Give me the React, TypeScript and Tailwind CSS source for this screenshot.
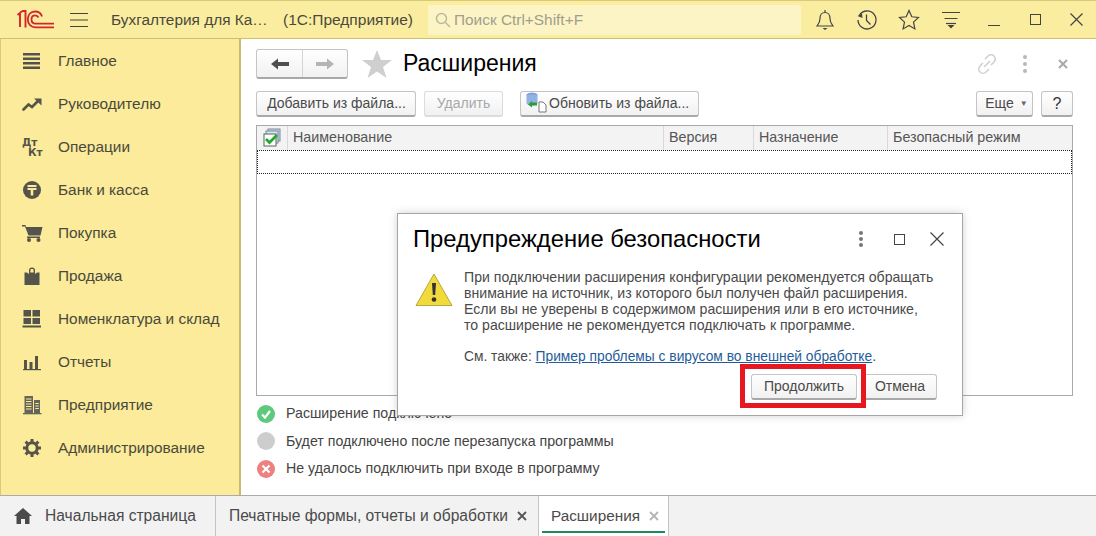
import React from 'react';

const font = { fontFamily: '"Liberation Sans", Arial, sans-serif' };

function Logo() {
  return (
    <svg width="38" height="20" viewBox="0 0 38 20" fill="none" stroke="#d3262c">
      <path d="M0.500 5 L3 3 V17 M3 2.500 L6 1 H8.500 V17.500" strokeWidth="1.900" />
      <path d="M25 6.500 C24 3 21 1.500 18 1.500 C13.500 1.500 10.800 5 10.800 9.500 C10.800 14 14 17.300 18.500 17.300 H37" strokeWidth="1.800" />
      <path d="M21.500 7.500 C20.800 6 19.500 5.300 18 5.300 C15.800 5.300 14.500 7 14.500 9.300 C14.500 11.800 16 13.600 18.500 13.600 H37" strokeWidth="1.800" />
    </svg>
  );
}

function Bell() {
  return (
    <svg width="20" height="22" viewBox="0 0 20 22" fill="none" stroke="#444" strokeWidth="1.200">
      <path d="M10 1v2M2 17c1.500-2 3-3.500 3-7.500 0-3.500 2-6 5-6s5 2.500 5 6c0 4 1.500 5.500 3 7.500z" />
      <path d="M7.500 19h5l-2.500 2z" fill="#444" stroke="none" />
    </svg>
  );
}
function History() {
  return (
    <svg width="22" height="22" viewBox="0 0 22 22" fill="none" stroke="#444" strokeWidth="1.300">
      <path d="M3.500 6A9 9 0 1 1 2 11" />
      <path d="M1.500 7l4.500-2.500L6.500 9z" fill="#444" stroke="none" />
      <path d="M10.500 5.500v6l4 4" />
    </svg>
  );
}
function StarOutline() {
  return (
    <svg width="22" height="22" viewBox="0 0 22 22" fill="none" stroke="#444" strokeWidth="1.200">
      <path d="M11 1.500l2.800 6.300 6.700.7-5 4.600 1.400 6.800-5.900-3.400-5.900 3.400 1.400-6.800-5-4.600 6.700-.7z" />
    </svg>
  );
}
function FilterLines() {
  return (
    <svg width="20" height="20" viewBox="0 0 20 20" fill="none" stroke="#444" strokeWidth="1.200">
      <path d="M1 2.500h18M3.500 8.500h13" />
      <path d="M6.500 15h7l-3.500 3.500z" fill="#444" stroke="none" />
      <path d="M5 13.500h10" />
    </svg>
  );
}

const iconFill = '#55544a';
const sideIcons: Record<string, React.ReactNode> = {
  main: <svg width="20" height="20" viewBox="0 0 20 20" fill={iconFill}><rect x="1" y="2" width="17" height="2.500" /><rect x="1" y="6.500" width="17" height="2.500" /><rect x="1" y="11" width="17" height="2.500" /><rect x="1" y="15.500" width="17" height="2.500" /></svg>,
  chart: <svg width="20" height="20" viewBox="0 0 20 20" fill="none" stroke={iconFill} strokeWidth="2.600" strokeLinecap="round"><path d="M1.500 15.500L6.500 10.500 10 13 15 8" /><path d="M12 4.500h7.500v7z" fill={iconFill} stroke="none" /></svg>,
  dtkt: <div className="relative w-[20px] h-[20px] font-bold text-[10.500px] leading-none" style={{ fontFamily: '"DejaVu Sans", sans-serif', color: iconFill }}><span className="absolute left-0 top-[0px]">Дт</span><span className="absolute left-[6px] top-[10px]">Кт</span></div>,
  bank: <svg width="20" height="20" viewBox="0 0 20 20"><circle cx="10" cy="10" r="9" fill={iconFill} /><path d="M5.500 5h9v2h-9zM5.500 8h9v2h-3.200v5.500h-2.600V10h-3.200z" fill="#fbeb9a" /></svg>,
  cart: <svg width="22" height="20" viewBox="0 0 22 20" fill={iconFill}><path d="M1 2h3.500l.5 2h16.500l-2 8.500H7.500L4 3.500H1z" /><rect x="6" y="13.500" width="13" height="1.500" /><circle cx="8" cy="17" r="2" /><circle cx="17.500" cy="17" r="2" /></svg>,
  bag: <svg width="20" height="20" viewBox="0 0 20 20" fill={iconFill}><path d="M2.500 6.500h2.500l2 1.500V4.500a3 3 0 0 1 6 0V8l2-1.500h2.500v12.500h-15zM8.300 6.500h3.400V4.500a1.700 1.700 0 0 0-3.400 0z" fillRule="evenodd" /></svg>,
  grid: <svg width="20" height="20" viewBox="0 0 20 20" fill={iconFill}><rect x="1.500" y="1" width="7.500" height="6.500" /><rect x="10.500" y="1" width="7.500" height="6.500" /><rect x="1.500" y="9" width="7.500" height="6" /><rect x="10.500" y="9" width="7.500" height="6" /><rect x="0.500" y="16.500" width="18.500" height="2" /></svg>,
  bars: <svg width="20" height="20" viewBox="0 0 20 20" fill={iconFill}><rect x="2" y="8" width="3" height="9" /><rect x="7.500" y="10" width="3" height="7" /><rect x="13" y="4" width="3" height="13" /><rect x="1" y="17" width="18" height="1.200" /></svg>,
  org: <svg width="20" height="20" viewBox="0 0 20 20" fill="#66655a"><path d="M2.500 1H11v17H2.500zM12 5h6v13h-6z" /><path d="M4 3.500h5.500v1H4zM4 6h5.500v1H4zM4 8.500h5.500v1H4zM4 11h5.500v1H4zM4 13.500h5.500v1H4zM13.300 8h3.500v1h-3.500zM13.300 10.500h3.500v1h-3.500zM13.300 13h3.500v1h-3.500z" fill="#fbeb9a" /><rect x="1" y="18" width="18.500" height="1.300" /></svg>,
  gear: <svg width="20" height="20" viewBox="0 0 20 20" fill="none" stroke={iconFill}><circle cx="10" cy="10" r="5.200" strokeWidth="3" /><path d="M10 1v3M10 16v3M1 10h3M16 10h3M3.600 3.600l2.200 2.200M14.200 14.200l2.200 2.200M3.600 16.400l2.200-2.200M14.200 5.800l2.200-2.200" strokeWidth="3" /></svg>,
};

const menu: [string, string][] = [
  ['main', 'Главное'], ['chart', 'Руководителю'], ['dtkt', 'Операции'], ['bank', 'Банк и касса'], ['cart', 'Покупка'],
  ['bag', 'Продажа'], ['grid', 'Номенклатура и склад'], ['bars', 'Отчеты'], ['org', 'Предприятие'], ['gear', 'Администрирование'],
];

function Btn({ children, className = '' }: { children: React.ReactNode; className?: string }) {
  return (
    <div className={`flex items-center justify-center h-[26px] rounded-[3px] border border-[#c4c4c4] border-b-[#a8a8a8] border-b-2 bg-gradient-to-b from-white to-[#f1f1f1] text-[14px] text-[#4a4a4a] ${className}`}>
      {children}
    </div>
  );
}

function Legend({ color, icon, text }: { color: string; icon: React.ReactNode; text: string }) {
  return (
    <div className="flex items-center h-[27.500px]">
      <svg width="18" height="18" viewBox="0 0 18 18" className="ml-[1px] shrink-0">
        <circle cx="9" cy="9" r="9" fill={color} />
        {icon}
      </svg>
      <span className="ml-[11px] text-[14.200px] text-[#444] whitespace-nowrap">{text}</span>
    </div>
  );
}

export default function App() {
  return (
    <div className="relative flex flex-col w-[1096px] h-[536px] overflow-hidden bg-white" style={font}>
      {/* top bar */}
      <header className="flex items-center h-[39px] shrink-0 bg-[#fbeda0] border-t border-t-[#d8ca7c] border-b border-b-[#cdbf70]">
        <div className="ml-[17px] w-[38px] flex"><Logo /></div>
        <svg width="18" height="16" viewBox="0 0 18 16" className="ml-[15px]" stroke="#444" strokeWidth="1.200"><path d="M0 1.500h18M0 8h18M0 14.500h18" /></svg>
        <span className="ml-[23px] text-[15.400px] text-[#4a4a3c] whitespace-nowrap w-[158px]">Бухгалтерия для Ка…</span>
        <span className="ml-[14px] text-[15.500px] text-[#4a4a3c] whitespace-nowrap w-[131px]">(1С:Предприятие)</span>
        <div className="ml-[14px] flex items-center w-[373px] h-[30px] bg-[#fdf4c6] rounded-[2px]">
          <svg width="16" height="16" viewBox="0 0 16 16" fill="none" stroke="#b9b9a0" strokeWidth="1.500" className="ml-[7px]"><circle cx="6.500" cy="6.500" r="5" /><path d="M10.500 10.500L15 15" /></svg>
          <span className="ml-[3px] text-[15.400px] text-[#a09f8c]">Поиск Ctrl+Shift+F</span>
        </div>
        <div className="ml-[12px] w-[24px] flex justify-center"><Bell /></div>
        <div className="ml-[18px] w-[24px] flex justify-center"><History /></div>
        <div className="ml-[18px] w-[24px] flex justify-center"><StarOutline /></div>
        <div className="ml-[18px] w-[24px] flex justify-center"><FilterLines /></div>
        <div className="ml-[25px] w-[12px] h-[12px] border-b-[1.500px] border-[#444]" />
        <div className="ml-[30px] w-[9px] h-[9px] border-[1.500px] border-[#444] box-content" />
        <svg width="13" height="13" viewBox="0 0 13 13" stroke="#444" strokeWidth="1.200" className="ml-[29px]"><path d="M.5.500l12 12M12.500.500l-12 12" /></svg>
      </header>

      <div className="flex flex-1 min-h-0">
        {/* sidebar */}
        <aside className="w-[241px] shrink-0 bg-[#fbeb9a] border-l border-l-[#d8ca7c] border-r-2 border-r-[#c8ba6e]">
          {menu.map(([k, label]) => (
            <div key={k} className="flex items-center h-[43px]">
              <div className="ml-[20px] w-[22px] h-[22px] flex items-center justify-center">{sideIcons[k]}</div>
              <span className="ml-[15px] text-[15.400px] text-[#4a4a3c] whitespace-nowrap">{label}</span>
            </div>
          ))}
        </aside>

        {/* main */}
        <main className="flex-1 flex flex-col min-w-0 pl-[15px] pr-[23px] pt-[10px]">
          <div className="flex items-center h-[30px]">
            <div className="flex w-[92px] h-[30px] rounded-[3px] border border-[#c4c4c4] border-b-2 border-b-[#a8a8a8] bg-gradient-to-b from-white to-[#f1f1f1]">
              <div className="w-[46px] flex items-center justify-center border-r border-[#d4d4d4]">
                <svg width="18" height="12" viewBox="0 0 18 12" fill="#4f4f4f"><path d="M0 6l7-5.500V4h11v4H7v3.500z" /></svg>
              </div>
              <div className="flex-1 flex items-center justify-center">
                <svg width="18" height="12" viewBox="0 0 18 12" fill="#b4b4b4"><path d="M18 6l-7-5.500V4H0v4h11v3.500z" /></svg>
              </div>
            </div>
            <svg width="30" height="28" viewBox="0 0 30 28" fill="#cfcfcf" className="ml-[14px]"><path d="M15 0l4 10h11l-9 7 3.500 11L15 21.500 5.500 28 9 17 0 10h11z" /></svg>
            <span className="ml-[11px] text-[23px] text-black whitespace-nowrap -mt-[1px]">Расширения</span>
            <div className="ml-auto flex items-center">
              <svg width="22" height="22" viewBox="0 0 22 22" fill="none" stroke="#d0d0d0" strokeWidth="1.600" className="mr-[25px]">
                <path d="M9 6l3-3a4 4 0 0 1 6 6l-3 3M13 16l-3 3a4 4 0 0 1-6-6l3-3M8 14l6-6" />
              </svg>
              <div className="flex flex-col gap-[3px] mr-[31px]">
                <i className="block w-[4px] h-[4px] rounded-full bg-[#b8b8b8]" />
                <i className="block w-[4px] h-[4px] rounded-full bg-[#b8b8b8]" />
                <i className="block w-[4px] h-[4px] rounded-full bg-[#b8b8b8]" />
              </div>
              <svg width="10" height="10" viewBox="0 0 10 10" stroke="#a8a8a8" strokeWidth="2" className="mr-[5px]"><path d="M1 1l8 8M9 1l-8 8" /></svg>
            </div>
          </div>

          <div className="flex items-center mt-[12px]">
            <Btn className="w-[160px] pl-[1px]">Добавить из файла...</Btn>
            <Btn className="w-[79px] ml-[8px] !text-[#a8a8a8] !border-[#dcdcdc]">Удалить</Btn>
            <Btn className="w-[179px] ml-[17px] !justify-start pl-[3px]">
              <svg width="24" height="22" viewBox="0 0 24 22" className="mr-[1px] -mt-[3px] shrink-0">
                <ellipse cx="8" cy="4" rx="5.500" ry="2.500" fill="#7fa6dc" />
                <path d="M2.500 4v8a5.500 2.500 0 0 0 11 0V4z" fill="#8fb4e4" />
                <path d="M8 10l-4 3.500 4 3v-2h5v-3H8z" fill="#2f9b3a" />
                <path d="M15 11h4l3 3v7h-7z" fill="#fff" stroke="#777" />
              </svg>
              Обновить из файла...
            </Btn>
            <Btn className="w-[57px] ml-auto pl-[4px]">Еще<span className="ml-[6px] text-[8px] text-[#666]">▼</span></Btn>
            <Btn className="w-[32px] ml-[8px] !text-[16px] !text-[#333]">?</Btn>
          </div>

          {/* table */}
          <div className="mt-[8px] h-[271px] border border-[#a9a9a9] flex flex-col">
            <div className="flex h-[24px] shrink-0 bg-[#f3f3f3] text-[14.300px] text-[#555]">
              <div className="w-[31px] flex items-center justify-center border-r border-[#d9d9d9]">
                <svg width="20" height="20" viewBox="0 0 20 20">
                  <rect x="6" y="1" width="12" height="12" fill="#c7d4e4" stroke="#7c8a9c" />
                  <rect x="4" y="3" width="12" height="12" fill="#dbe5f0" stroke="#7c8a9c" />
                  <rect x="2" y="6" width="12" height="12" fill="#fff" stroke="#4f6b50" />
                  <path d="M4 11l3.500 3.500L15 7" fill="none" stroke="#25a82f" strokeWidth="2.800" />
                </svg>
              </div>
              <div className="w-[376px] flex items-center pl-[5px] border-r border-[#d9d9d9]">Наименование</div>
              <div className="w-[90px] flex items-center pl-[5px] border-r border-[#d9d9d9]">Версия</div>
              <div className="w-[134px] flex items-center pl-[5px] border-r border-[#d9d9d9]">Назначение</div>
              <div className="flex-1 flex items-center pl-[5px]">Безопасный режим</div>
            </div>
            <div className="h-[24px] shrink-0 border border-dotted border-[#222]" />
          </div>

          {/* legend */}
          <div className="mt-[4px]">
            <Legend color="#5dc97d" text="Расширение подключено" icon={<path d="M5 9.500l3 3 5-6.500" fill="none" stroke="#fff" strokeWidth="2.200" />} />
            <Legend color="#cdcdcd" text="Будет подключено после перезапуска программы" icon={null} />
            <Legend color="#ef8080" text="Не удалось подключить при входе в программу" icon={<path d="M5.500 5.500l7 7M12.500 5.500l-7 7" fill="none" stroke="#fff" strokeWidth="2.200" />} />
          </div>
        </main>
      </div>

      {/* tabs */}
      <footer className="flex h-[41px] shrink-0 bg-[#f2f2f2] border-t border-[#ababab] text-[15.600px] text-[#4a4a4a]">
        <div className="w-[216px] flex items-center border-r border-[#c4c4c4]">
          <svg width="18" height="16" viewBox="0 0 18 16" fill="#4a4a4a" className="ml-[14px]"><path d="M9 0l9 8h-2.500v8H11v-5H7v5H2.500V8H0z" /></svg>
          <span className="ml-[13px] whitespace-nowrap">Начальная страница</span>
        </div>
        <div className="w-[323px] flex items-center border-r border-[#c4c4c4]">
          <span className="ml-[13px] whitespace-nowrap">Печатные формы, отчеты и обработки</span>
          <svg width="10" height="10" viewBox="0 0 10 10" stroke="#555" strokeWidth="1.800" className="ml-[9px]"><path d="M1 1l8 8M9 1l-8 8" /></svg>
        </div>
        <div className="relative w-[130px] flex items-center bg-white border-r border-[#c4c4c4]">
          <span className="ml-[12px] text-[15.300px]">Расширения</span>
          <svg width="10" height="10" viewBox="0 0 10 10" stroke="#b4b4b4" strokeWidth="1.800" className="ml-[9px]"><path d="M1 1l8 8M9 1l-8 8" /></svg>
          <div className="absolute left-[3px] right-[3px] bottom-[3px] h-[2px] bg-[#1f8a5c]" />
        </div>
      </footer>

      {/* dialog */}
      <div className="absolute left-[397px] top-[213px] w-[566px] h-[203px] bg-white border border-[#a6a6a6] shadow-[0_0_8px_rgba(0,0,0,0.18)] flex flex-col">
        <div className="flex items-center h-[50px]">
          <span className="ml-[15px] text-[23.800px] text-black whitespace-nowrap">Предупреждение безопасности</span>
          <div className="ml-auto flex items-center">
            <div className="flex flex-col gap-[2px] mr-[31px]">
              <i className="block w-[4px] h-[4px] rounded-full bg-[#777]" />
              <i className="block w-[4px] h-[4px] rounded-full bg-[#777]" />
              <i className="block w-[4px] h-[4px] rounded-full bg-[#777]" />
            </div>
            <div className="w-[9px] h-[9px] border-[1.500px] border-[#444] box-content mr-[25px]" />
            <svg width="14" height="14" viewBox="0 0 14 14" stroke="#444" strokeWidth="1.200" className="mr-[18px]"><path d="M.5.500l13 13M13.500.500l-13 13" /></svg>
          </div>
        </div>
        <div className="flex flex-1">
          <svg width="38" height="34" viewBox="0 0 38 34" className="ml-[17px] mt-[9px] shrink-0">
            <path d="M19 1L37 32.500H1z" fill="#f1da3c" stroke="#b9a83c" />
            <path d="M17 10h4l-.8 12h-2.400z" fill="#333" />
            <circle cx="19" cy="26.500" r="2.300" fill="#333" />
          </svg>
          <div className="ml-[11px] mt-[5px] text-[14.100px] leading-[16px] text-[#4a4a4a] whitespace-nowrap">
            <div>При подключении расширения конфигурации рекомендуется обращать</div>
            <div>внимание на источник, из которого был получен файл расширения.</div>
            <div>Если вы не уверены в содержимом расширения или в его источнике,</div>
            <div>то расширение не рекомендуется подключать к программе.</div>
            <div className="mt-[16px] text-[13.800px]">См. также: <span className="text-[#1f5c99] underline">Пример проблемы с вирусом во внешней обработке</span>.</div>
          </div>
        </div>
        <div className="absolute right-[25px] bottom-[15px] flex gap-[6px]">
          <Btn className="w-[106px]">Продолжить</Btn>
          <Btn className="w-[74px]">Отмена</Btn>
        </div>
      </div>

      {/* red highlight */}
      <div className="absolute left-[740px] top-[364px] w-[126px] h-[44px] border-[5px] border-[#e8161f]" />
    </div>
  );
}
